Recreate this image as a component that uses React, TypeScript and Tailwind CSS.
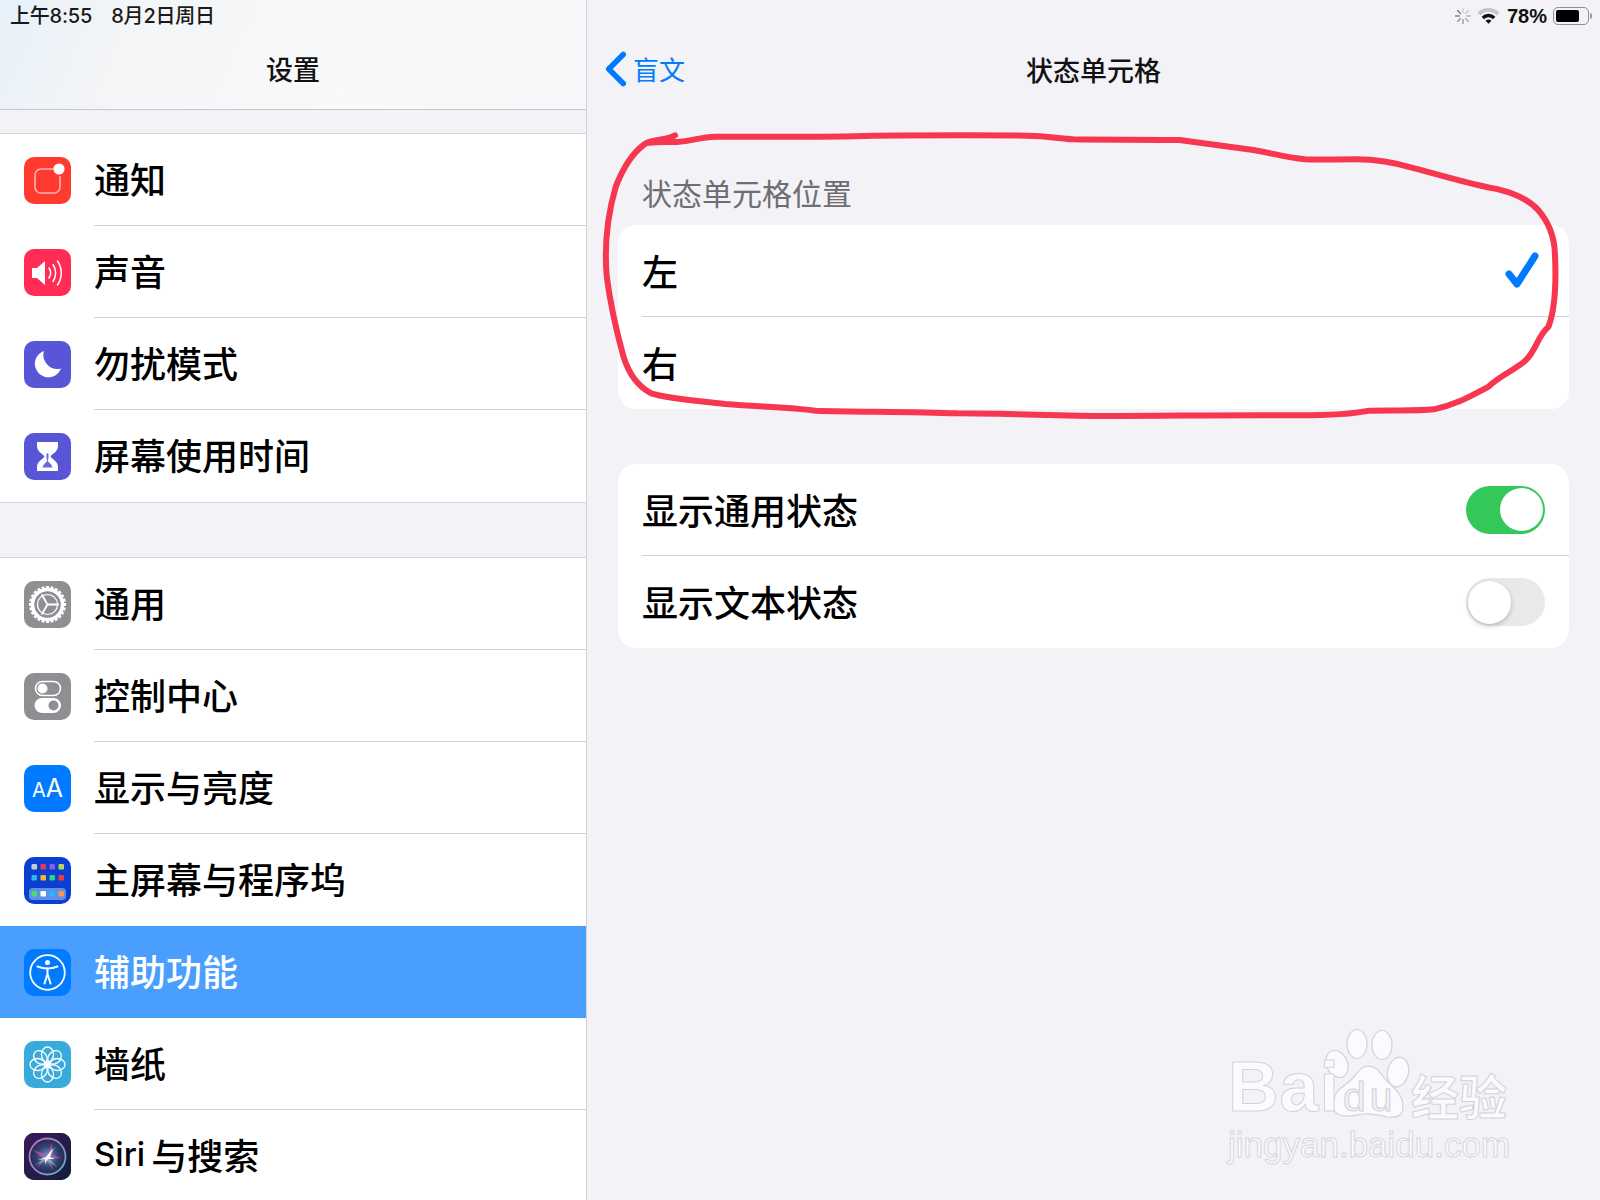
import type { ReactNode } from "react";
import { ChevronLeft } from "lucide-react";

const CJK = "font-['Noto_Sans_CJK_SC','Noto_Sans',sans-serif]";

function IconBox({ className, children }: { className: string; children: ReactNode }) {
  return (
    <div className={`flex h-[47px] w-[47px] shrink-0 items-center justify-center overflow-hidden rounded-[10px] ${className}`}>
      {children}
    </div>
  );
}

function NotifyIcon() {
  return (
    <svg width="47" height="47" viewBox="0 0 47 47" fill="none">
      <path d="M29 12H17a6 6 0 0 0-6 6v12a6 6 0 0 0 6 6h13a6 6 0 0 0 6-6V19" stroke="#ffb5ae" strokeWidth="1.6" />
      <circle cx="35" cy="12" r="5.6" fill="#fff" />
    </svg>
  );
}

function SoundIcon() {
  return (
    <svg width="47" height="47" viewBox="0 0 47 47" fill="none">
      <path d="M8 19h5l8-7v24l-8-7H8z" fill="#fff" />
      <path d="M25 19c2 3 2 7 0 10M29 15.500c3.500 5 3.500 12 0 17M33.500 12c5 7 5 17 0 24" stroke="#fff" strokeWidth="1.500" strokeLinecap="round" />
    </svg>
  );
}

function MoonIcon() {
  return (
    <svg width="47" height="47" viewBox="0 0 47 47">
      <path d="M20 10A13.500 13.500 0 1 0 37 27.500A14 14 0 0 1 20 10z" fill="#fff" />
    </svg>
  );
}

function HourglassIcon() {
  return (
    <svg width="47" height="47" viewBox="0 0 47 47" fill="none">
      <path d="M13 9h21v4c0 6-6 7.500-7.500 10.500C28 26.500 34 28 34 34v4H13v-4c0-6 6-7.500 7.500-10.500C19 20.500 13 19 13 13z" fill="#fff" />
      <path d="M23.500 20.500c-.4 2-.4 4 0 5.500.4-1.500.4-3.500 0-5.500z" stroke="#6b69dd" strokeWidth="1.600" />
      <path d="M23.500 27c-.8 2.500-4 3.500-5 7.500h10c-1-4-4.200-5-5-7.500z" fill="#6b69dd" />
    </svg>
  );
}

function GearIcon() {
  const teeth = Array.from({ length: 24 }, (_, i) => i * 15);
  return (
    <svg width="47" height="47" viewBox="0 0 47 47" fill="none">
      <circle cx="23.500" cy="23.500" r="15" stroke="#fff" strokeWidth="3.400" />
      {teeth.map((a) => (
        <rect key={a} x="22" y="5" width="3" height="5" fill="#fff" transform={`rotate(${a} 23.500 23.500)`} />
      ))}
      <circle cx="23.500" cy="23.500" r="10" stroke="#fff" strokeWidth="1.200" />
      <path d="M23.500 23.500V12M23.500 23.500l10 5.800M23.500 23.500l-10 5.800" stroke="#fff" strokeWidth="1.800" transform="rotate(90 23.500 23.500)" />
    </svg>
  );
}

function ToggleIcon() {
  return (
    <svg width="47" height="47" viewBox="0 0 47 47" fill="none">
      <rect x="11.500" y="8.500" width="25" height="14" rx="7" stroke="#fff" strokeWidth="1.600" />
      <circle cx="18.500" cy="15.500" r="5" fill="#fff" />
      <rect x="10.500" y="25" width="26.500" height="15" rx="7.500" fill="#fff" />
      <circle cx="29.500" cy="32.500" r="5" fill="#8e8e93" />
    </svg>
  );
}

function HomeGridIcon() {
  const rows = [
    ["#c7ccd6", "#e5395a", "#8f5bea", "#b8d65a"],
    ["#2ab5f5", "#f5b52e", "#2fd08a", "#e8403a"],
  ];
  return (
    <svg width="47" height="47" viewBox="0 0 47 47">
      {rows.map((row, y) =>
        row.map((c, x) => <rect key={`${y}-${x}`} x={7.500 + x * 9} y={7 + y * 11} width="5.500" height="5.500" rx="1.200" fill={c} />),
      )}
      <rect x="5" y="31" width="37" height="12" rx="3.500" fill="#5e8ee8" />
      <rect x="7.500" y="34" width="5.500" height="5.500" rx="1.200" fill="#4cd964" />
      <rect x="16.500" y="34" width="5.500" height="5.500" rx="1.200" fill="#fff" />
      <rect x="25.500" y="34" width="5.500" height="5.500" rx="1.200" fill="#29b5f6" />
      <rect x="34.500" y="34" width="5.500" height="5.500" rx="1.200" fill="#f09a4a" />
    </svg>
  );
}

function AccessIcon() {
  return (
    <svg width="47" height="47" viewBox="0 0 47 47" fill="none">
      <circle cx="23.500" cy="23.500" r="17.300" stroke="#fff" strokeWidth="1.800" />
      <circle cx="23.500" cy="13.500" r="2.500" fill="#fff" />
      <path d="M13.500 17.500c3.500 1.500 6.500 2 10 2s6.500-.5 10-2" stroke="#fff" strokeWidth="2" strokeLinecap="round" />
      <path d="M23.500 19.500v7M23.500 25l-3 9.500M23.500 25l3 9.500" stroke="#fff" strokeWidth="2" strokeLinecap="round" />
    </svg>
  );
}

function FlowerIcon() {
  const petals = [0, 45, 90, 135, 180, 225, 270, 315];
  return (
    <svg width="47" height="47" viewBox="0 0 47 47" fill="none">
      {petals.map((a) => (
        <ellipse key={a} cx="23.500" cy="13.500" rx="6" ry="7.500" stroke="#fff" strokeWidth="1.300" transform={`rotate(${a} 23.500 23.500)`} />
      ))}
      <circle cx="23.500" cy="23.500" r="2.400" fill="#fff" />
    </svg>
  );
}

function SiriIcon() {
  return (
    <svg width="47" height="47" viewBox="0 0 47 47" fill="none">
      <defs>
        <linearGradient id="siriBg" x1="0" y1="0" x2="1" y2="1">
          <stop offset="0" stopColor="#3a1a57" />
          <stop offset="1" stopColor="#141c3c" />
        </linearGradient>
        <linearGradient id="siriRing" x1="0" y1="0" x2="1" y2="1">
          <stop offset="0" stopColor="#c86ab8" />
          <stop offset="0.500" stopColor="#8a8ac8" />
          <stop offset="1" stopColor="#4fc0c0" />
        </linearGradient>
        <radialGradient id="siriBall">
          <stop offset="0" stopColor="#6fa0e0" />
          <stop offset="0.600" stopColor="#34406f" />
          <stop offset="1" stopColor="#2a2650" />
        </radialGradient>
      </defs>
      <rect width="47" height="47" fill="url(#siriBg)" />
      <circle cx="23.500" cy="23.500" r="18" fill="url(#siriBall)" stroke="url(#siriRing)" strokeWidth="1.800" />
      <path d="M9 17l14 5 5-12 0 12 9 3-11 1 3 11-7-10-9 8 6-10z" fill="#e0559f" opacity="0.650" />
      <path d="M10 33l12-9 10-11-7 12 8 9-11-7z" fill="#4fe0c8" opacity="0.700" />
      <path d="M14 27l8-3 7-9-3 9 5 2-7 0-3 5 0-5z" fill="#fff" opacity="0.950" />
    </svg>
  );
}

type Item = { label: string; node?: ReactNode; icon: ReactNode; bg: string; active?: boolean; last?: boolean };

const groupOne: Item[] = [
  { label: "通知", icon: <NotifyIcon />, bg: "bg-[#ff3b30]" },
  { label: "声音", icon: <SoundIcon />, bg: "bg-[#ff2d55]" },
  { label: "勿扰模式", icon: <MoonIcon />, bg: "bg-[#5856d6]" },
  { label: "屏幕使用时间", icon: <HourglassIcon />, bg: "bg-[#5856d6]", last: true },
];

const groupTwo: Item[] = [
  { label: "通用", icon: <GearIcon />, bg: "bg-[#8e8e93]" },
  { label: "控制中心", icon: <ToggleIcon />, bg: "bg-[#8e8e93]" },
  {
    label: "显示与亮度",
    icon: <span className="font-['Inter',sans-serif] text-[25px] leading-none text-white"><span className="text-[20px]">A</span>A</span>,
    bg: "bg-[#007aff]",
  },
  { label: "主屏幕与程序坞", icon: <HomeGridIcon />, bg: "bg-[#0a3fd0]", last: true },
  { label: "辅助功能", icon: <AccessIcon />, bg: "bg-[#007aff]", active: true, last: true },
  { label: "墙纸", icon: <FlowerIcon />, bg: "bg-[#38aadc]" },
  {
    label: "Siri 与搜索",
    node: <><span className="mr-[6px] font-['Inter',sans-serif] text-[33px]">Siri</span>与搜索</>,
    icon: <SiriIcon />,
    bg: "bg-[#1a1c40]",
    last: true,
  },
];

function SettingsRow({ item }: { item: Item }) {
  return (
    <div className={`flex h-[92px] items-center pl-[24px] ${item.active ? "bg-[#4a9ffe]" : ""}`}>
      <IconBox className={item.bg}>{item.icon}</IconBox>
      <div
        className={`ml-[23px] flex h-full flex-1 items-center border-b pb-[3px] text-[36px] font-medium leading-none ${
          item.last ? "border-transparent" : "border-[#d1d1d6]"
        } ${item.active ? "text-white" : "text-black"}`}
      >
        {item.node ?? item.label}
      </div>
    </div>
  );
}

function Toggle({ on }: { on: boolean }) {
  if (on) {
    return (
      <div className="flex h-[48px] w-[79px] items-center justify-end rounded-full bg-[#34c759] pr-[2px]">
        <div className="h-[43px] w-[43px] rounded-full bg-white" />
      </div>
    );
  }
  return (
    <div className="flex h-[48px] w-[79px] items-center rounded-full bg-[#e9e9ea] pl-[2px]">
      <div className="h-[43px] w-[43px] rounded-full bg-white shadow-[0_2px_5px_rgba(0,0,0,0.22)]" />
    </div>
  );
}

function StatusIcons() {
  const spokes = Array.from({ length: 8 }, (_, i) => i * 45);
  return (
    <div className="flex items-center">
      <svg width="18" height="18" viewBox="0 0 18 18" className="mr-[5px]">
        {spokes.map((a, i) => (
          <rect key={a} x="8.300" y="1" width="1.400" height="5" fill="#555" opacity={0.2 + i * 0.09} transform={`rotate(${a} 9 9)`} />
        ))}
      </svg>
      <svg width="23" height="17" viewBox="0 0 23 17" className="mr-[7px]">
        <path d="M0.500 5.500A15.500 15.500 0 0 1 22.500 5.500L19.800 8.300A11.500 11.500 0 0 0 3.200 8.300Z" fill="#c5c5c8" />
        <path d="M4.600 9.700A9.600 9.600 0 0 1 18.400 9.700L15.900 12.200A6.200 6.200 0 0 0 7.100 12.200Z" fill="#111" />
        <path d="M8.600 13.700A4 4 0 0 1 14.400 13.700L11.500 16.700Z" fill="#111" />
      </svg>
      <span className="mr-[6px] font-['Liberation_Sans',sans-serif] text-[20px] font-bold leading-none text-[#111]">78%</span>
      <div className="flex h-[18px] w-[36px] items-center rounded-[5px] border border-[#8e8e93] p-[2px]">
        <div className="h-full w-[78%] rounded-[2px] bg-black" />
      </div>
      <div className="ml-[1px] h-[6px] w-[2px] rounded-r-sm bg-[#9a9a9f]" />
    </div>
  );
}

// red marker stroke, traced from the photo (coords are stretched to the svg box)
const scribble =
  "M132 46 C120 62 100 55 85 72 C65 100 50 150 40 200 C28 280 22 380 26 470 C32 560 42 640 52 710 C60 760 75 800 95 820 C125 838 170 842 210 852 C260 860 310 862 350 872 C420 876 500 874 570 880 C650 880 730 888 800 888 C900 888 1000 884 1100 886 C1140 886 1180 884 1210 872 C1250 870 1280 874 1310 868 C1345 855 1370 825 1395 800 C1410 770 1440 745 1452 722 C1470 690 1470 650 1488 620 C1498 570 1500 480 1498 400 C1497 350 1490 310 1472 270 C1458 240 1440 222 1410 208 C1370 195 1320 165 1280 145 C1250 128 1225 118 1190 118 C1160 118 1130 120 1110 118 C1080 112 1060 100 1030 90 C1000 82 960 72 915 60 C860 58 800 60 750 58 C725 55 710 48 680 47 C600 45 520 46 440 47 C360 52 280 50 195 50 C170 52 160 62 135 66 C120 67 105 65 92 68";

function Watermark() {
  return (
    <div className="pointer-events-none absolute left-[1220px] top-[1025px] h-[150px] w-[300px]">
      <svg width="300" height="100" viewBox="0 0 300 100" className="absolute left-0 top-0" fill="#fbfbfe" stroke="#d2d2d8" strokeWidth="1.200">
        <ellipse cx="117" cy="39" rx="10.500" ry="14" transform="rotate(-25 117 39)" />
        <ellipse cx="137" cy="19" rx="10" ry="14.500" />
        <ellipse cx="162" cy="20" rx="10" ry="14.500" />
        <ellipse cx="178" cy="47" rx="10.500" ry="15" transform="rotate(12 178 47)" />
        <path d="M144 42c10-3 14 2 22 13 8 8 17 14 17 27 0 10-8 11-16 10-8-2-15-4-23-3-10 1-18 4-24 1-8-2-8-12-5-19 3-8 10-10 17-17 4-4 7-10 12-12z" />
      </svg>
      <span className="absolute left-[8px] top-[22px] font-['Liberation_Sans',sans-serif] text-[70px] font-bold leading-[80px] tracking-[1px] text-[#fbfbfe] [-webkit-text-stroke:1px_#d2d2d8]">
        Bai
      </span>
      <span className="absolute left-[123px] top-[54px] font-['Liberation_Sans',sans-serif] text-[41px] leading-[36px] tracking-[4px] text-[#f2f2f7] [-webkit-text-stroke:1px_#cfcfd6]">
        du
      </span>
      <span className={`absolute left-[191px] top-[39px] text-[48px] font-bold leading-[60px] text-[#fbfbfe] [-webkit-text-stroke:1px_#d2d2d8] ${CJK}`}>
        经验
      </span>
      <span className="absolute left-[8px] top-[98px] font-['Liberation_Sans',sans-serif] text-[35px] leading-[44px] text-[#fbfbfe] [-webkit-text-stroke:1px_#d6d6dc]">
        jingyan.baidu.com
      </span>
    </div>
  );
}

export default function App() {
  return (
    <div className={`relative flex h-[1200px] w-[1600px] overflow-hidden bg-[#f2f2f7] ${CJK}`}>
      <aside className="h-full w-[587px] shrink-0 overflow-hidden border-r border-[#d1d1d6]">
        <div className="h-[110px] border-b border-[#c6c6cb] bg-[linear-gradient(115deg,#e6f1f9_0%,#f4f5f7_22%,#f9f9fa_60%,#f8f8fa_100%)]">
          <div className="flex h-[31px] items-center gap-[19px] pl-[10px] font-['Inter','Noto_Sans_CJK_SC',sans-serif] text-[20px] font-medium leading-none tracking-[-0.2px] text-[#1a1a1a]">
            <span>上午8:55</span>
            <span>8月2日周日</span>
          </div>
          <div className="mt-[20px] text-center text-[27px] font-medium leading-[36px] text-[#111]">设置</div>
        </div>
        <div className="mt-[23px] border-y border-[#d8d8dc] bg-white">
          {groupOne.map((item) => (
            <SettingsRow key={item.label} item={item} />
          ))}
        </div>
        <div className="mt-[54px] border-t border-[#d8d8dc] bg-white">
          {groupTwo.map((item) => (
            <SettingsRow key={item.label} item={item} />
          ))}
        </div>
      </aside>

      <main className="min-w-0 flex-1">
        <div className="flex h-[31px] items-center justify-end pr-[8px]">
          <StatusIcons />
        </div>
        <div className="relative mt-[20px] flex h-[36px] items-center justify-center text-[27px] font-medium leading-none text-[#111]">
          <div className="absolute left-0 top-0 flex h-full items-center text-[26px] font-normal text-[#007aff]">
            <ChevronLeft size={58} strokeWidth={2.300} className="-mr-[12px]" />
            <span>盲文</span>
          </div>
          状态单元格
        </div>
        <div className="mx-[31px] mt-[85px]">
          <div className="pl-[24px] text-[30px] leading-[40px] text-[#6d6d72]">状态单元格位置</div>
          <div className="mt-[13px] overflow-hidden rounded-[18px] bg-white">
            <div className="ml-[24px] flex h-[92px] items-center justify-between border-b border-[#d1d1d6] pb-[2px] pr-[30px] text-[36px] font-medium leading-none text-black">
              左
              <svg width="34" height="36" viewBox="0 0 34 36" fill="none">
                <path d="M4 22l8 10L30 4" stroke="#007aff" strokeWidth="7" strokeLinecap="round" strokeLinejoin="round" />
              </svg>
            </div>
            <div className="ml-[24px] flex h-[92px] items-center pb-[2px] text-[36px] font-medium leading-none text-black">右</div>
          </div>
          <div className="mt-[55px] overflow-hidden rounded-[18px] bg-white">
            <div className="ml-[24px] flex h-[92px] items-center justify-between border-b border-[#d1d1d6] pr-[24px] text-[36px] font-medium leading-none text-black">
              <span className="-mt-[2px]">显示通用状态</span>
              <Toggle on />
            </div>
            <div className="ml-[24px] flex h-[92px] items-center justify-between pr-[24px] text-[36px] font-medium leading-none text-black">
              <span className="-mt-[2px]">显示文本状态</span>
              <Toggle on={false} />
            </div>
          </div>
        </div>
      </main>

      <svg
        className="pointer-events-none absolute left-[590px] top-[120px]"
        width="1010"
        height="310"
        viewBox="0 0 1568 930"
        preserveAspectRatio="none"
        fill="none"
      >
        <path d={scribble} stroke="#f73650" strokeWidth="6" strokeLinecap="round" strokeLinejoin="round" vectorEffect="non-scaling-stroke" />
      </svg>
      <Watermark />
    </div>
  );
}
